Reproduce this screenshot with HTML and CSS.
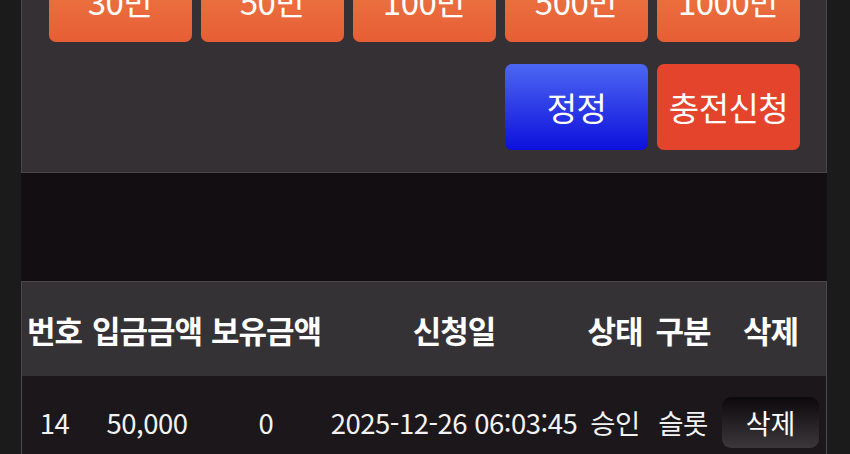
FILE: index.html
```html
<!DOCTYPE html>
<html lang="ko">
<head>
<meta charset="utf-8">
<link rel="stylesheet" href="styles.css">
</head>
<body>
<div class="page">
  <div class="content">
    <section class="panel charge">
      <div class="amounts">
        <button class="btn btn-amount">30만</button>
        <button class="btn btn-amount">50만</button>
        <button class="btn btn-amount">100만</button>
        <button class="btn btn-amount">500만</button>
        <button class="btn btn-amount">1000만</button>
      </div>
      <div class="actions">
        <button class="btn btn-reset">정정</button>
        <button class="btn btn-submit">충전신청</button>
      </div>
    </section>
    <div class="gap"></div>
    <section class="panel list">
      <div class="grid thead">
        <div>번호</div>
        <div>입금금액</div>
        <div>보유금액</div>
        <div>신청일</div>
        <div>상태</div>
        <div>구분</div>
        <div>삭제</div>
      </div>
      <div class="grid trow">
        <div>14</div>
        <div>50,000</div>
        <div>0</div>
        <div>2025-12-26 06:03:45</div>
        <div>승인</div>
        <div>슬롯</div>
        <div><button class="btn-del">삭제</button></div>
      </div>
    </section>
  </div>
</div>
</body>
</html>
```
FILE: styles.css
```css
html, body {
  margin: 0;
  padding: 0;
}
body {
  background: #1c1b1c;
  font-family: "Noto Sans CJK KR", "Noto Sans", sans-serif;
  color: #fff;
  overflow: hidden;
}
.page {
  padding: 0 23px 0 21px;
  margin-top: -64px;
}
.content {
  background: #120e12;
}
.panel {
  border: 1px solid #4a484a;
}
.charge {
  background: #343033;
  padding: 19px 26px 22px 27px;
  display: flex;
  flex-direction: column;
  gap: 22px;
}
.amounts {
  display: grid;
  grid-template-columns: repeat(5, 143px);
  gap: 9px;
}
.actions {
  display: flex;
  justify-content: flex-end;
  gap: 9px;
}
.btn {
  width: 143px;
  height: 86px;
  border: 0;
  border-radius: 7px;
  color: #fff;
  font-family: "Noto Sans CJK KR", sans-serif;
  font-size: 33px;
  padding: 0;
  letter-spacing: -0.5px;
}
.btn-amount {
  width: auto;
  padding-top: 4px;
  background: linear-gradient(#f07f48, #e65e35);
}
.btn-reset {
  background: linear-gradient(#4c67f2, #0d10dc);
}
.btn-submit {
  background: #e4432c;
}
.gap {
  height: 108px;
}
.list {
  background: #1b171a;
  border-bottom: 0;
}
.grid {
  display: grid;
  grid-template-columns: 65px 120px 118px 258px 64px 72px 103px;
  align-items: center;
  justify-items: center;
  white-space: nowrap;
}
.thead {
  background: #353235;
  height: 94px;
  font-size: 31px;
  font-weight: 700;
  letter-spacing: -1px;
}
.trow {
  height: 92px;
  font-size: 27.5px;
  letter-spacing: -0.5px;
  color: #f2f2f2;
}
.btn-del {
  width: 97px;
  height: 51px;
  border: 0;
  border-radius: 9px;
  background: linear-gradient(#0c090c, #3b373a);
  color: #fff;
  font-family: "Noto Sans CJK KR", sans-serif;
  font-size: 27px;
  padding: 0;
}
```
